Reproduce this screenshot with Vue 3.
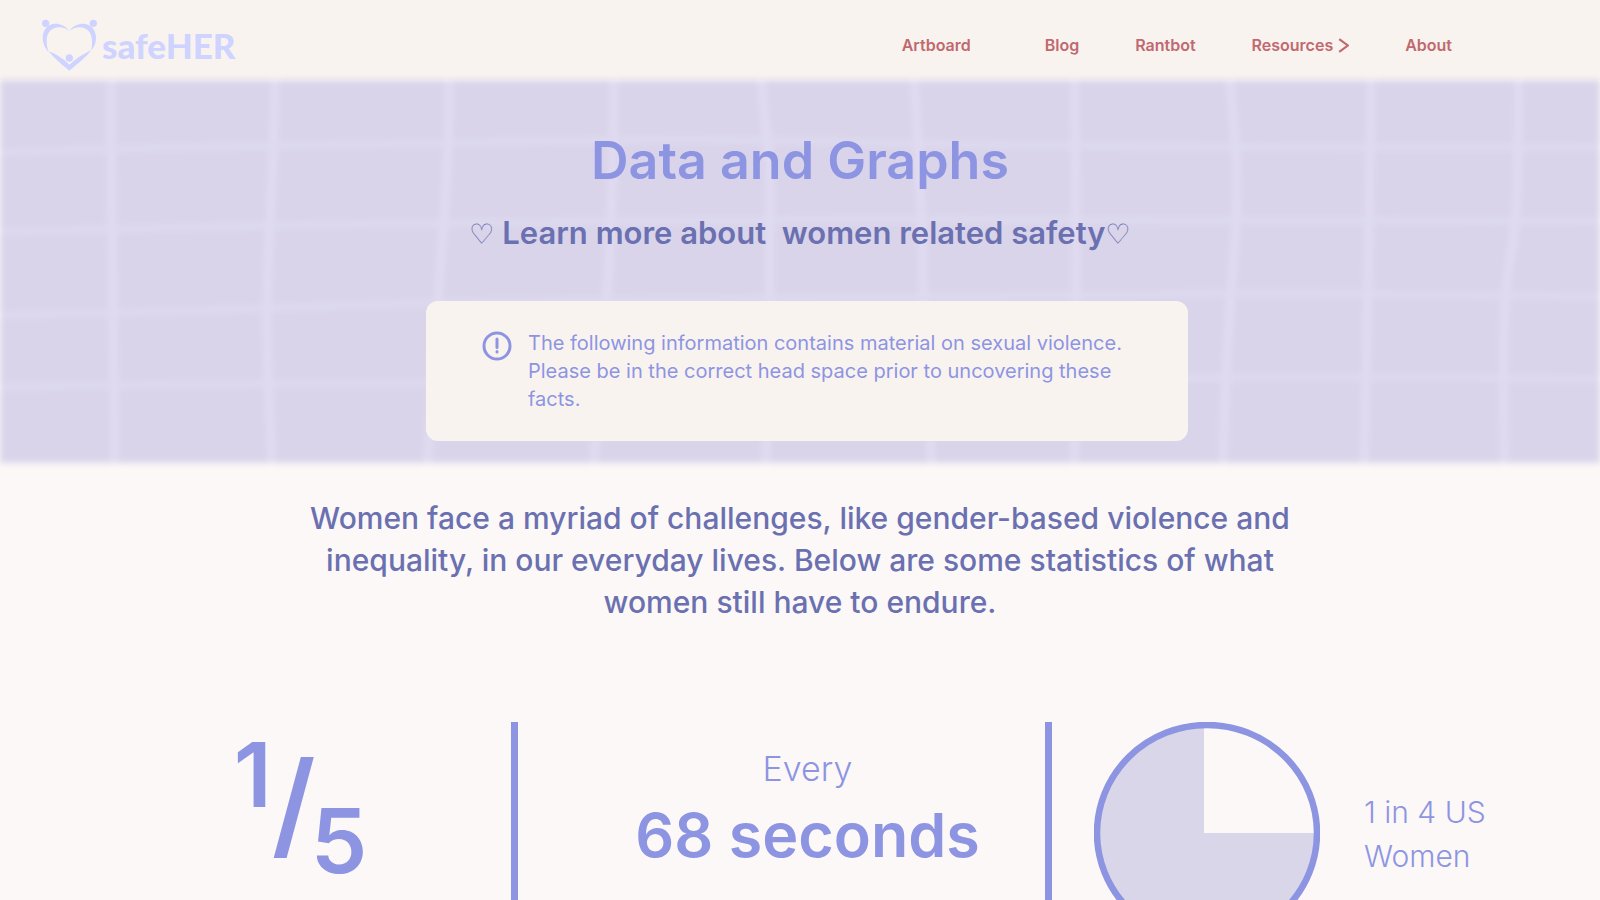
<script setup>
const links = [
  { label: 'Artboard', wide: true },
  { label: 'Blog' },
  { label: 'Rantbot' },
  { label: 'Resources', menu: true },
  { label: 'About' },
]
const gridLines = [
  'M111 -10 C111 130 114 250 115 400',
  'M275 -10 C275 90 266 170 267 250 S272 350 272 400',
  'M449 -10 C450 90 441 170 438 220 S430 340 426 400',
  'M614 -10 C614 100 610 170 607 220 S597 340 592 400',
  'M761 -10 C763 40 770 60 770 110 S770 300 765 400',
  'M914 -10 C917 60 922 120 923 200 S930 340 932 400',
  'M1074 -10 C1077 130 1077 250 1074 400',
  'M1229 -10 C1234 50 1240 90 1235 160 S1224 300 1223 400',
  'M1371 -10 C1370 130 1367 250 1364 400',
  'M1519 -10 C1517 60 1520 130 1510 180 S1505 330 1504 400',
]
const rowLines = [
  'M-10 73 C150 66 300 66 444 63 S700 58 850 62 S1300 68 1610 67',
  'M-10 152 C150 148 300 144 444 143 S800 138 1000 140 S1400 142 1610 141',
  'M-10 235 C150 234 280 227 430 223 S800 219 1000 216 S1300 212 1610 217',
  'M-10 307 C150 304 280 304 430 303 S900 300 1200 298 S1400 298 1610 299',
]
</script>

<template>
  <div class="page">
    <header class="topbar">
      <a class="brand" href="#" aria-label="safeHER home">
        <svg class="brand-mark" viewBox="120 55 174 162" aria-hidden="true">
          <circle cx="137" cy="71" r="11" />
          <circle cx="280" cy="71" r="11" />
          <circle cx="208" cy="175" r="11" />
          <path d="M208 94C196 77 180 71 163 72C142 74 128 92 128 114C128 131 136 146 146 157C141 145 140 134 140 122C141 98 156 83 176 83C190 83 200 88 208 94Z" />
          <path d="M208 94C220 77 236 71 253 72C274 74 288 92 288 114C288 131 282 143 274 152C276 142 276 134 276 122C275 98 260 83 240 83C226 83 216 88 208 94Z" />
          <path d="M146 155C168 163 190 177 208 195C226 177 250 163 274 151C260 172 232 193 208 213C184 194 160 173 146 155Z" />
        </svg>
        <span class="brand-name">safeHER</span>
      </a>
      <nav class="nav" aria-label="Main">
        <a v-for="l in links" :key="l.label" href="#" :class="{ wide: l.wide }">
          {{ l.label }}
          <svg v-if="l.menu" class="chevron" viewBox="0 0 10 14" aria-hidden="true">
            <path d="M1 1L9 7L1 13" />
          </svg>
        </a>
      </nav>
    </header>

    <section class="hero">
      <svg class="hero-bg" viewBox="0 0 1600 383" preserveAspectRatio="none" aria-hidden="true">
        <rect width="1600" height="383" />
        <path v-for="d in gridLines" :key="d" class="col-line" :d="d" />
        <path v-for="d in rowLines" :key="d" class="row-line" :d="d" />
      </svg>
      <h1>Data and Graphs</h1>
      <h2><span class="heart">♡</span> Learn more about&nbsp; women related safety<span class="heart">♡</span></h2>
      <div class="notice" role="note">
        <svg class="notice-icon" viewBox="0 0 30 30" aria-hidden="true">
          <circle cx="15" cy="15" r="13" />
          <path d="M15 8V16.5" />
          <path d="M15 20.5V21" />
        </svg>
        <p>The following information contains material on sexual violence. Please be in the correct head space prior to uncovering these facts.</p>
      </div>
    </section>

    <main>
      <p class="intro">Women face a myriad of challenges, like gender-based violence and inequality, in our everyday lives. Below are some statistics of what women still have to endure.</p>
      <section class="stats">
        <div class="stat fraction">
          <span class="num">1</span><span class="slash">/</span><span class="den">5</span>
        </div>
        <div class="stat rate">
          <span class="every">Every</span>
          <strong>68 seconds</strong>
        </div>
        <div class="stat share">
          <svg class="pie" viewBox="0 0 226 222" aria-hidden="true">
            <ellipse cx="113" cy="111" rx="110" ry="108" class="pie-fill" />
            <path d="M110 0H226V111H110Z" class="pie-gap" />
            <ellipse cx="113" cy="111" rx="110" ry="108" class="pie-ring" />
          </svg>
          <p>1 in 4 US Women</p>
        </div>
      </section>
    </main>
  </div>
</template>

<style>
body {
  margin: 0;
  background: #fcf8f7;
}
html {
  overflow: hidden;
}
</style>

<style scoped>
.page {
  font-family: Inter, "Liberation Sans", sans-serif;
  color: #8d95e2;
  background: #fcf8f7;
  height: 100vh;
  overflow: hidden;
}
h1, h2, p {
  margin: 0;
}
.topbar {
  display: flex;
  align-items: center;
  justify-content: space-between;
  height: 80px;
  padding: 0 148px 0 40px;
  background: #f9f3f0;
}
.brand {
  display: flex;
  align-items: center;
  gap: 4px;
  padding-top: 10px;
  color: #ced3ff;
  text-decoration: none;
}
.brand-mark {
  width: 58px;
  height: 54px;
  fill: currentColor;
}
.brand-name {
  font: 900 35px/40px Lato, sans-serif;
}
.nav {
  display: flex;
  gap: 56px;
  padding-top: 10px;
}
.nav a {
  display: flex;
  align-items: center;
  gap: 5px;
  color: #c0696f;
  font-size: 16px;
  font-weight: 600;
  line-height: 20px;
  text-decoration: none;
}
.nav .wide {
  padding-right: 18px;
}
.chevron {
  width: 11px;
  height: 15px;
  fill: none;
  stroke: currentColor;
  stroke-width: 2;
}
.hero {
  position: relative;
  display: flex;
  flex-direction: column;
  align-items: center;
  padding: 45px 24px 22px;
}
.hero-bg {
  position: absolute;
  inset: 0;
  width: 100%;
  height: 100%;
  filter: blur(3px);
}
.hero-bg rect {
  fill: #d9d4ea;
}
.hero-bg path {
  fill: none;
  stroke: #e1dcf1;
}
.hero-bg .col-line {
  stroke-width: 8px;
}
.hero-bg .row-line {
  stroke: #dedaef;
  stroke-width: 6px;
}
h1, h2, .notice {
  position: relative;
}
h1 {
  font-size: 52px;
  font-weight: 600;
  line-height: 72px;
}
h2 {
  margin-top: 14px;
  color: #6a70b0;
  font-size: 31px;
  font-weight: 600;
  line-height: 44px;
}
.heart {
  font-family: "DejaVu Sans", sans-serif;
  font-size: 28px;
  font-weight: 400;
}
.notice {
  display: flex;
  align-items: flex-start;
  gap: 16px;
  box-sizing: border-box;
  width: 762px;
  max-width: 100%;
  margin: 44px 0 0 14px;
  padding: 28px 44px 28px 56px;
  border-radius: 12px;
  background: #f9f3f0;
  font-size: 20px;
  font-weight: 400;
  line-height: 28px;
}
.notice-icon {
  flex: none;
  width: 30px;
  height: 30px;
  margin-top: 2px;
  fill: none;
  stroke: currentColor;
  stroke-width: 3;
  stroke-linecap: round;
}
.intro {
  max-width: 1000px;
  margin: 0 auto;
  padding-top: 34px;
  color: #6a70b0;
  font-size: 30px;
  font-weight: 500;
  line-height: 42px;
  text-align: center;
}
.stats {
  display: grid;
  grid-template-columns: 518fr 534fr 548fr;
  margin-top: 99px;
}
.stat {
  box-sizing: border-box;
  min-height: 260px;
}
.fraction, .rate {
  border-right: 7px solid #8d95e2;
}
.fraction {
  display: flex;
  justify-content: center;
  padding: 1px 0 0 90px;
  font-size: 90px;
  font-weight: 600;
  line-height: 104px;
}
.slash {
  margin-right: -5px;
  padding-top: 28px;
  font-size: 116px;
}
.den {
  padding-top: 66px;
}
.rate {
  display: flex;
  flex-direction: column;
  align-items: center;
  padding: 23px 0 0 52px;
}
.every {
  font-size: 34px;
  font-weight: 300;
  line-height: 48px;
}
.rate strong {
  font-size: 61px;
  font-weight: 600;
  line-height: 84px;
}
.share {
  display: flex;
  align-items: flex-start;
  gap: 44px;
  padding-left: 42px;
}
.pie {
  flex: none;
  width: 226px;
  height: 222px;
}
.pie-fill {
  fill: #dad6ea;
}
.pie-gap {
  fill: #fcf8f7;
}
.pie-ring {
  fill: none;
  stroke: #8d95e2;
  stroke-width: 6.5;
}
.share p {
  width: 150px;
  padding-top: 68px;
  font-size: 30px;
  font-weight: 300;
  line-height: 44px;
}
</style>
